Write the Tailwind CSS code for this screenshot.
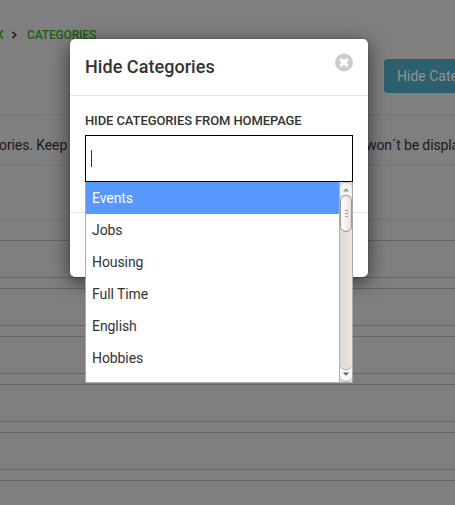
<!DOCTYPE html>
<html lang="en">
<head>
<meta charset="utf-8">
<title>Hide Categories</title>
<script src="https://cdn.jsdelivr.net/npm/@tailwindcss/browser@4"></script>
</head>
<body class="relative h-[505px] w-[455px] overflow-hidden bg-[#7f7f7f] font-[Roboto,sans-serif] text-[14px] leading-5 text-[#1a1a1a]">
<!-- Page under the dialog -->
<main class="flex h-[505px] flex-col overflow-hidden">
  <nav class="flex h-[59px] shrink-0 items-start pt-[26px] text-[12px] leading-[18px] font-medium tracking-[-0.15px] text-[#1c5f0c]">
    <span class="-ml-1 w-[8px]">X</span>
    <svg class="mt-[5px] ml-[7px]" width="7" height="8" viewBox="0 0 7 8" fill="none" stroke="#222" stroke-width="1.7"><path d="M1.5 .8 4.8 4 1.5 7.2"/></svg>
    <span class="ml-[9px]">CATEGORIES</span>
  </nav>
  <div class="flex h-[56px] shrink-0 justify-end border-b border-[#757575]">
    <button class="h-[34px] w-[71px] shrink-0 overflow-hidden rounded-l border border-r-0 border-[#235f6f] bg-[#2d606f] pl-3 text-left whitespace-nowrap text-[#929292]">Hide Categories</button>
  </div>
  <div class="flex h-[51px] shrink-0 justify-between border-b border-[#757575] pt-5 whitespace-nowrap">
    <span class="-ml-px tracking-[-0.1px]">ories. Keep</span>
    <span class="w-[89px] overflow-hidden tracking-[-0.12px]">won´t be displayed</span>
  </div>
  <div class="h-[54px] shrink-0 border-b border-[#757575]"></div>
  <div class="flex flex-col gap-[10px] pt-5">
    <div class="h-[38px] border-y border-[#666]"></div>
    <div class="h-[38px] border-y border-[#666]"></div>
    <div class="h-[38px] border-y border-[#666]"></div>
    <div class="h-[38px] border-y border-[#666]"></div>
    <div class="h-[38px] border-y border-[#666]"></div>
    <div class="h-[38px] border-y border-[#666]"></div>
  </div>
</main>
<!-- Dialog -->
<section class="absolute top-[39px] left-[70px] h-[238px] w-[298px] rounded-[5px] bg-white text-[#333] shadow-[0_5px_20px_rgba(0,0,0,0.6),0_0_2px_rgba(0,0,0,0.3)]">
  <header class="flex h-[57px] justify-between border-b border-[#e5e5e5] pr-[15px] pl-[15px]">
    <h1 class="pt-[17px] text-[18px] leading-[21px] font-medium tracking-[0.05px]">Hide Categories</h1>
    <svg class="mt-[14px]" width="18" height="19" viewBox="0 0 18 19"><circle cx="9" cy="9.5" r="9" fill="#ccc"/><path d="m5.4 5.9 7.2 7.2m0-7.2-7.2 7.2" stroke="#fff" stroke-width="3.3"/></svg>
  </header>
  <div class="h-[117px] border-b border-[#e5e5e5] px-[15px] pt-[15px]">
    <label class="block h-[24px] text-[13px] leading-[20px] font-medium tracking-[-0.1px] whitespace-nowrap">HIDE CATEGORIES FROM HOMEPAGE</label>
    <div class="h-[47px] w-[268px] border border-black bg-white pt-[14px] pl-[5px]"><div class="h-[17px] w-px bg-[#333]"></div></div>
    <div class="absolute top-[143px] left-[15px] flex h-[201px] w-[268px] overflow-hidden rounded-b-[2px] border border-t-0 border-[#aaa] bg-white">
      <ul class="flex-1 tracking-[-0.08px] [&>li]:h-8 [&>li]:pl-[6px] [&>li]:leading-8">
        <li class="bg-[#5897fb] text-white">Events</li>
        <li>Jobs</li>
        <li>Housing</li>
        <li>Full Time</li>
        <li>English</li>
        <li>Hobbies</li>
      </ul>
      <div class="flex w-[13px] flex-col border-l border-[#b9aea5] bg-linear-to-r from-[#dfd9d4] to-[#ebe5e1]">
        <div class="flex h-[13px] justify-center rounded-t-[6px] border-t border-[#c5bbb3] bg-[#f5f3f1] pt-[5px]"><svg width="6" height="4" viewBox="0 0 6 4"><path d="M0 3.5 3 .2 6 3.5Z" fill="#9a9590"/></svg></div>
        <div class="flex h-[37px] flex-col items-center justify-center gap-[2px] rounded-[6px] border border-[#9f978f] bg-linear-to-r from-white to-[#e6e1dd]">
          <i class="h-px w-[3px] bg-[#a6a09b]"></i><i class="h-px w-[3px] bg-[#a6a09b]"></i><i class="h-px w-[3px] bg-[#a6a09b]"></i>
        </div>
        <div class="-mb-[2px] flex-1"></div>
        <div class="flex h-[15px] items-end justify-center rounded-b-[6px] border-b border-[#b9aea5] bg-[radial-gradient(circle_at_50%_-4px,#e5dfdb_6px,#b9aea5_6.5px,#f8f6f5_7.5px)] pb-[5px]"><svg width="6" height="4" viewBox="0 0 6 4"><path d="M0 .5 3 3.8 6 .5Z" fill="#69645f"/></svg></div>
      </div>
    </div>
  </div>
</section>
</body>
</html>
